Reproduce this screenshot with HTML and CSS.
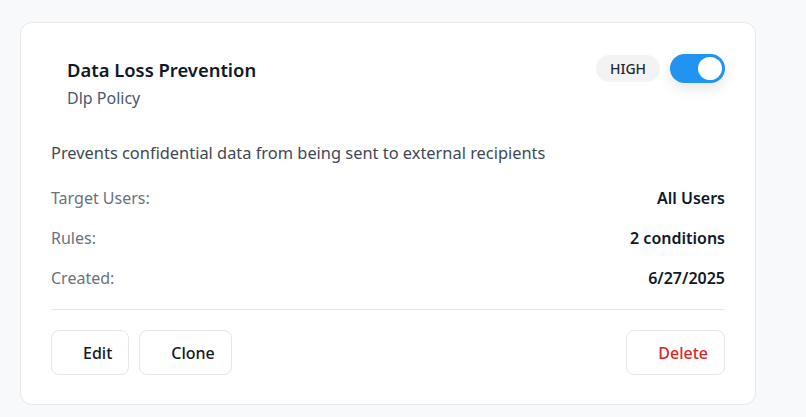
FILE: index.html
```
<!DOCTYPE html>
<html lang="en">
<head>
<meta charset="utf-8">
<title>Policy Card</title>
<link rel="stylesheet" href="styles.css">
</head>
<body>
<div class="card">
  <div class="header">
    <div class="titles">
      <div class="title">Data Loss Prevention</div>
      <div class="subtitle">Dlp Policy</div>
    </div>
    <div class="controls">
      <span class="badge">HIGH</span>
      <span class="toggle"><span class="knob"></span></span>
    </div>
  </div>
  <p class="desc">Prevents confidential data from being sent to external recipients</p>
  <div class="rows">
    <div class="row"><span class="label">Target Users:</span><span class="value">All Users</span></div>
    <div class="row"><span class="label">Rules:</span><span class="value">2 conditions</span></div>
    <div class="row"><span class="label">Created:</span><span class="value">6/27/2025</span></div>
  </div>
  <div class="actions">
    <div class="left">
      <button class="btn">Edit</button>
      <button class="btn">Clone</button>
    </div>
    <button class="btn danger">Delete</button>
  </div>
</div>
</body>
</html>
```
FILE: styles.css
```
* { box-sizing: border-box; }
body {
  margin: 0;
  padding: 22px 0 0 20px;
  background: #f8f9fb;
  font-family: "Noto Sans", "Open Sans", sans-serif;
  color: #111827;
}
.card {
  width: 736px;
  height: 383px;
  background: #fff;
  border: 1px solid #e5e7eb;
  border-radius: 12px;
  padding: 30px;
}
.header {
  display: flex;
  justify-content: space-between;
  align-items: flex-start;
}
.titles { padding: 4px 0 0 16px; }
.title {
  font-size: 18.4px;
  line-height: 26px;
  font-weight: 600;
  color: #111827;
}
.subtitle {
  margin-top: 3px;
  font-size: 16px;
  line-height: 24px;
  color: #4a5870;
}
.controls {
  display: flex;
  align-items: center;
  gap: 10px;
  padding-top: 1px;
}
.badge {
  display: inline-flex;
  align-items: center;
  justify-content: center;
  width: 64px;
  height: 27px;
  border-radius: 14px;
  background: #f3f3f3;
  font-size: 14px;
  font-weight: 500;
  color: #1f2937;
}
.toggle {
  position: relative;
  display: inline-block;
  width: 55px;
  height: 29px;
  border-radius: 15px;
  background: #2193f0;
  box-shadow: 0 5px 14px rgba(0, 0, 0, 0.1);
}
.knob {
  position: absolute;
  top: 3px;
  right: 3px;
  width: 24px;
  height: 23px;
  border-radius: 50%;
  background: #fff;
}
.desc {
  margin: 31px 0 0;
  font-size: 16.4px;
  line-height: 24px;
  color: #3f4856;
}
.rows {
  margin-top: 21px;
  display: flex;
  flex-direction: column;
  gap: 16px;
}
.row {
  display: flex;
  justify-content: space-between;
  font-size: 16px;
  line-height: 24px;
}
.label { color: #6b7280; }
.value { font-weight: 600; color: #111827; }
.actions {
  margin-top: 19px;
  border-top: 1px solid #e5e7eb;
  padding-top: 20px;
  display: flex;
  justify-content: space-between;
}
.left { display: flex; gap: 10px; }
.btn {
  height: 45px;
  padding: 0 16px 0 31px;
  border: 1px solid #e5e7eb;
  border-radius: 8px;
  background: #fff;
  font-family: inherit;
  font-size: 16px;
  font-weight: 500;
  color: #111827;
}
.btn.danger { color: #dc2626; }
```
